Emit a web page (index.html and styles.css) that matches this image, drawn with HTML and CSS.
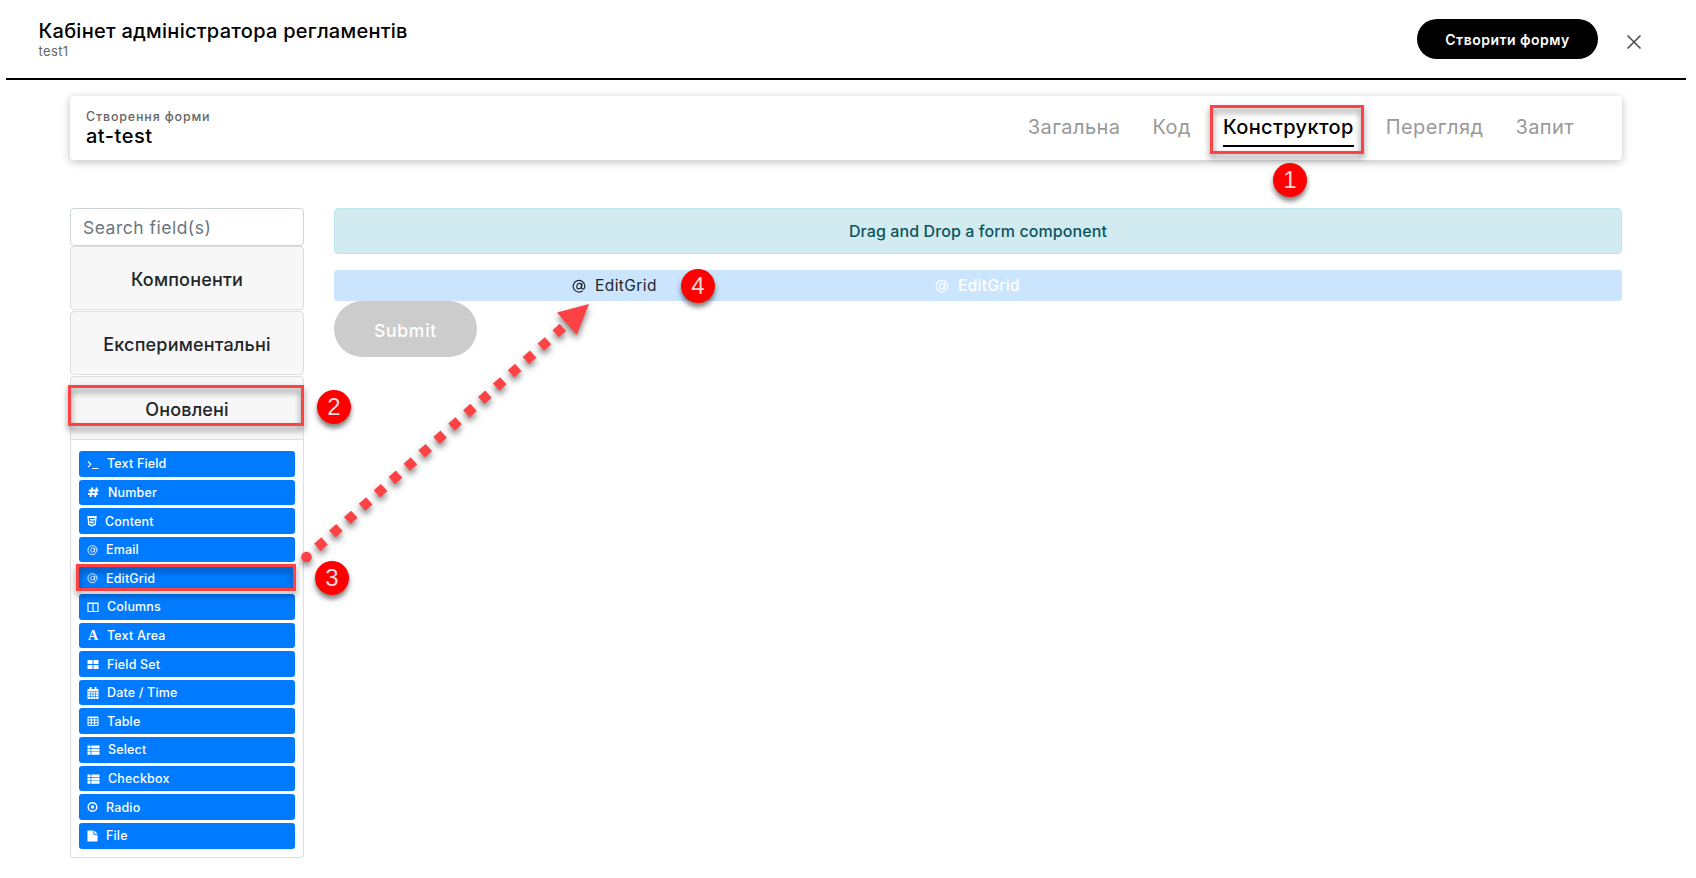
FILE: index.html
```html
<!DOCTYPE html>
<html lang="uk">
<head>
<meta charset="utf-8">
<title>Кабінет адміністратора регламентів</title>
<link rel="stylesheet" href="styles.css">
</head>
<body>
<header class="topbar">
  <div class="brand">
    <div class="brand-title">Кабінет адміністратора регламентів</div>
    <div class="brand-sub">test1</div>
  </div>
  <button class="create">Створити форму</button>
  <svg class="close" viewBox="0 0 16 16"><path d="M1.500 1.500l13 13M14.500 1.500l-13 13"/></svg>
</header>
<main class="page">
  <section class="form-head">
    <div class="form-name">
      <div class="form-label">Створення форми</div>
      <div class="form-title">at-test</div>
    </div>
    <nav class="tabs">
      <a class="tab">Загальна</a>
      <a class="tab">Код</a>
      <a class="tab active">Конструктор</a>
      <a class="tab">Перегляд</a>
      <a class="tab">Запит</a>
    </nav>
  </section>
  <div class="builder">
    <aside class="sidebar">
      <div class="search">Search field(s)</div>
      <div class="group">Компоненти</div>
      <div class="group">Експериментальні</div>
      <div class="group open">Оновлені</div>
      <div class="items">
        <div class="item"><svg class="ico w12" viewBox="0 0 12 12"><path class="ln" d="M1 3.500l2.800 2.800L1 9.100M5 10.500h6.500"/></svg><span>Text Field</span></div>
        <div class="item"><svg class="ico w13" viewBox="0 0 12 12"><path class="ln thick" d="M4.800 1.500L3 11M9.300 1.500L7.500 11M1.300 4.500H11M.5 8H10.200"/></svg><span>Number</span></div>
        <div class="item"><svg class="ico w10" viewBox="0 0 10 12"><path d="M.3 1h9.400l-.9 9L5 11.500 1.200 10z"/><path class="cut" d="M7.800 3.500H2.500l.2 2.500h4.700L7.100 8.600 5 9.200 2.900 8.600 2.800 7.500"/></svg><span>Content</span></div>
        <div class="item"><svg class="ico w11" viewBox="0 0 12 12"><use href="#at"/></svg><span>Email</span></div>
        <div class="item"><svg class="ico w11" viewBox="0 0 12 12"><use href="#at"/></svg><span>EditGrid</span></div>
        <div class="item"><svg class="ico w12" viewBox="0 0 12 12"><path class="ln" d="M1 2h10v8.500H1zM6 2v8.500M.5 2.300h11"/></svg><span>Columns</span></div>
        <div class="item"><span class="ico w12 serif">A</span><span>Text Area</span></div>
        <div class="item"><svg class="ico w12" viewBox="0 0 12 12"><path d="M.5 2h5v4h-5zM6.500 2h5v4h-5zM.5 7h5v4h-5zM6.500 7h5v4h-5z"/></svg><span>Field Set</span></div>
        <div class="item"><svg class="ico w12" viewBox="0 0 12 12"><path d="M.5 2h11v10H.5zM2.500 0h2v3h-2zM7.500 0h2v3h-2z"/><path class="cut thin" d="M1 4.500h10M1 7h10M1 9.500h10M3.500 4.500V11.500M6 4.500V11.500M8.500 4.500V11.500"/></svg><span>Date / Time</span></div>
        <div class="item"><svg class="ico w12" viewBox="0 0 12 12"><path class="ln fine" d="M1 2h10v8.500H1zM1 2.500h10M1 5h10M1 7.800h10M4.300 2v8.500M7.700 2v8.500"/></svg><span>Table</span></div>
        <div class="item"><svg class="ico w13" viewBox="0 0 13 12"><use href="#list"/></svg><span>Select</span></div>
        <div class="item"><svg class="ico w13" viewBox="0 0 13 12"><use href="#list"/></svg><span>Checkbox</span></div>
        <div class="item"><svg class="ico w11" viewBox="0 0 12 12"><circle class="ln mid" cx="6" cy="6" r="4.700"/><circle cx="6" cy="6" r="1.900"/></svg><span>Radio</span></div>
        <div class="item"><svg class="ico w11" viewBox="0 0 12 12"><path d="M.5 0H7v4.500h4.500V12H.5zM8 0l3.500 3.500H8z"/></svg><span>File</span></div>
      </div>
    </aside>
    <section class="canvas">
      <div class="alert">Drag and Drop a form component</div>
      <div class="row">
        <div class="ghost dark"><svg class="at-ico" viewBox="0 0 12 12"><use href="#at"/></svg><span>EditGrid</span></div>
        <div class="ghost light"><svg class="at-ico" viewBox="0 0 12 12"><use href="#at"/></svg><span>EditGrid</span></div>
      </div>
      <button class="submit">Submit</button>
    </section>
  </div>
</main>

<svg class="defs" width="0" height="0">
  <symbol id="at" viewBox="0 0 12 12"><path class="at" d="M9.300 10A5 5 0 1 1 11 6c0 1.700-.8 2.600-1.700 2.600S8 8 8.200 7l.5-3.200M8.100 5.400c0 1.800-1.100 3-2.300 3C4.800 8.400 4.100 7.700 4.100 6.600 4.100 5 5.100 3.800 6.400 3.800c1 0 1.700.6 1.700 1.600z"/></symbol>
  <symbol id="list" viewBox="0 0 13 12"><path d="M.5 1.500h3v2.600h-3zM4.300 1.500h8.200v2.600H4.300zM.5 4.800h3v2.600h-3zM4.300 4.800h8.200v2.600H4.300zM.5 8.100h3v2.600h-3zM4.300 8.100h8.200v2.600H4.300z"/></symbol>
</svg>
<div class="mark m1"></div><div class="mark m2"></div><div class="mark m3"></div>
<svg class="arrow" viewBox="0 0 310 280">
  <circle cx="16.500" cy="267" r="5.300"/>
  <path class="dots" d="M27.400 257.300L280 31"/>
  <path d="M299 14L267 22.500L286.700 45z"/>
</svg>
<div class="step s1">1</div><div class="step s2">2</div><div class="step s3">3</div><div class="step s4">4</div>
</body>
</html>
```
FILE: styles.css
```css
* { box-sizing: border-box; }
body { margin: 0; width: 1696px; height: 878px; overflow: hidden; position: relative; background: #fff; font-family: Inter, "Noto Sans", sans-serif; color: #000; }
button { border: 0; margin: 0; padding: 0; font-family: inherit; }
svg { display: block; }
.topbar { margin: 0 10px 0 6px; height: 80px; border-bottom: 2px solid #000; display: flex; align-items: flex-start; padding: 19px 44px 0 32.500px; }
.brand { flex: 1; white-space: nowrap; }
.brand-title { font-size: 20px; line-height: 24px; font-weight: 500; letter-spacing: .26px; }
.brand-sub { font-size: 13px; line-height: 17px; color: #666; letter-spacing: .38px; }
.create { width: 181px; height: 40px; border-radius: 20px; background: #000; color: #fff; font-size: 14px; font-weight: 600; white-space: nowrap; letter-spacing: .48px; }
.close { width: 16px; height: 16px; margin: 15px 0 0 28px; stroke: #4d4d4d; stroke-width: 1.6; fill: none; }
.page { padding: 16px 74px 0 70px; }
.form-head { height: 64px; border-radius: 4px; box-shadow: 0 2px 8px rgba(0,0,0,.25); display: flex; justify-content: space-between; padding: 12px 48px 0 16px; }
.form-label { font-size: 12.500px; line-height: 17px; color: #666; font-weight: 500; letter-spacing: .82px; }
.form-title { font-size: 20px; line-height: 22px; font-weight: 500; letter-spacing: .5px; }
.tabs { display: flex; gap: 32px; }
.tab { font-size: 20px; line-height: 24px; height: 39px; padding-top: 7px; color: #999; white-space: nowrap; letter-spacing: .42px; }
.tab.active { color: #000; font-weight: 500; border-bottom: 2px solid #000; letter-spacing: .37px; }
.builder { display: flex; gap: 30px; margin-top: 48px; }
.sidebar { width: 234px; flex: none; }
.search { height: 38px; border: 1px solid #ced4da; border-radius: 4px; padding-left: 12px; font-size: 17.500px; line-height: 38px; color: #6c757d; letter-spacing: .5px; }
.group { height: 64px; margin-bottom: 1px; border: 1px solid #dedede; border-radius: 4px; background: #f7f7f7; color: #212529; font-size: 18px; font-weight: 500; display: flex; align-items: center; justify-content: center; padding-top: 3px; letter-spacing: .18px; }
.group.open { margin-bottom: 0; border-radius: 4px 4px 0 0; }
.items { border: 1px solid #dedede; border-top: 0; border-radius: 0 0 4px 4px; height: 418px; padding: 11px 8px 0; display: flex; flex-direction: column; gap: 3px; }
.item { height: 25.62px; flex: none; border-radius: 3px; background: #007bff; color: #fff; font-size: 12.500px; font-weight: 500; display: flex; align-items: center; gap: 8px; padding-left: 8px; letter-spacing: .17px; }
.ico { height: 12px; fill: #fff; }
.w10 { width: 10px; } .w11 { width: 11px; } .w12 { width: 12px; } .w13 { width: 13px; }
.ln { fill: none; stroke: #fff; stroke-width: 1.200; }
.fine { stroke-width: 1; }
.thick { stroke-width: 1.800; } .mid { stroke-width: 1.600; }
.cut { fill: none; stroke: #007bff; stroke-width: 1.200; }
.thin { stroke-width: .6; }
.serif { font: bold 14px/14px "Liberation Serif", serif; text-align: center; letter-spacing: 0; }
.at { fill: none; stroke: currentColor; stroke-width: 1; }
.canvas { flex: 1; }
.alert { height: 46px; border: 1px solid #bee5eb; border-radius: 4px; background: #d1ebf0; color: #0c5460; font-size: 16px; font-weight: 500; line-height: 45px; text-align: center; letter-spacing: .09px; }
.row { height: 31px; margin-top: 16px; border-radius: 3px; background: #cbe5ff; display: flex; padding-left: 238px; }
.ghost { display: flex; align-items: center; gap: 9px; width: 363px; font-size: 15.500px; color: #212529; letter-spacing: .43px; }
.light { color: #fff; font-weight: 500; letter-spacing: .33px; }
.at-ico { width: 14px; height: 14px; }
.submit { display: block; width: 143px; height: 56px; border-radius: 28px; background: #ccc; color: #fff; font-size: 17.500px; font-weight: 500; letter-spacing: .75px; padding-top: 3px; }
.defs { position: absolute; }
.mark { position: absolute; border: 3px solid #fc4245; filter: drop-shadow(0 4px 3px rgba(0,0,0,.5)); }
.m1 { left: 1210px; top: 105px; width: 154px; height: 49px; }
.m2 { left: 68px; top: 385px; width: 236px; height: 41px; }
.m3 { left: 76px; top: 564px; width: 220px; height: 27px; }
.arrow { position: absolute; left: 290px; top: 290px; width: 310px; height: 280px; fill: #fc4245; filter: drop-shadow(0 4px 3px rgba(0,0,0,.5)); }
.dots { stroke: #fc4245; stroke-width: 9.600; stroke-dasharray: 9.600 10.400; }
.step { position: absolute; width: 34px; height: 34px; border-radius: 50%; background: #f00; color: #f4dada; font: 24px/34px "Liberation Sans", sans-serif; text-align: center; box-shadow: 0 4px 5px rgba(0,0,0,.5); }
.s1 { left: 1273px; top: 162.500px; } .s2 { left: 317px; top: 390px; } .s3 { left: 315px; top: 561px; } .s4 { left: 681px; top: 269px; }
```
